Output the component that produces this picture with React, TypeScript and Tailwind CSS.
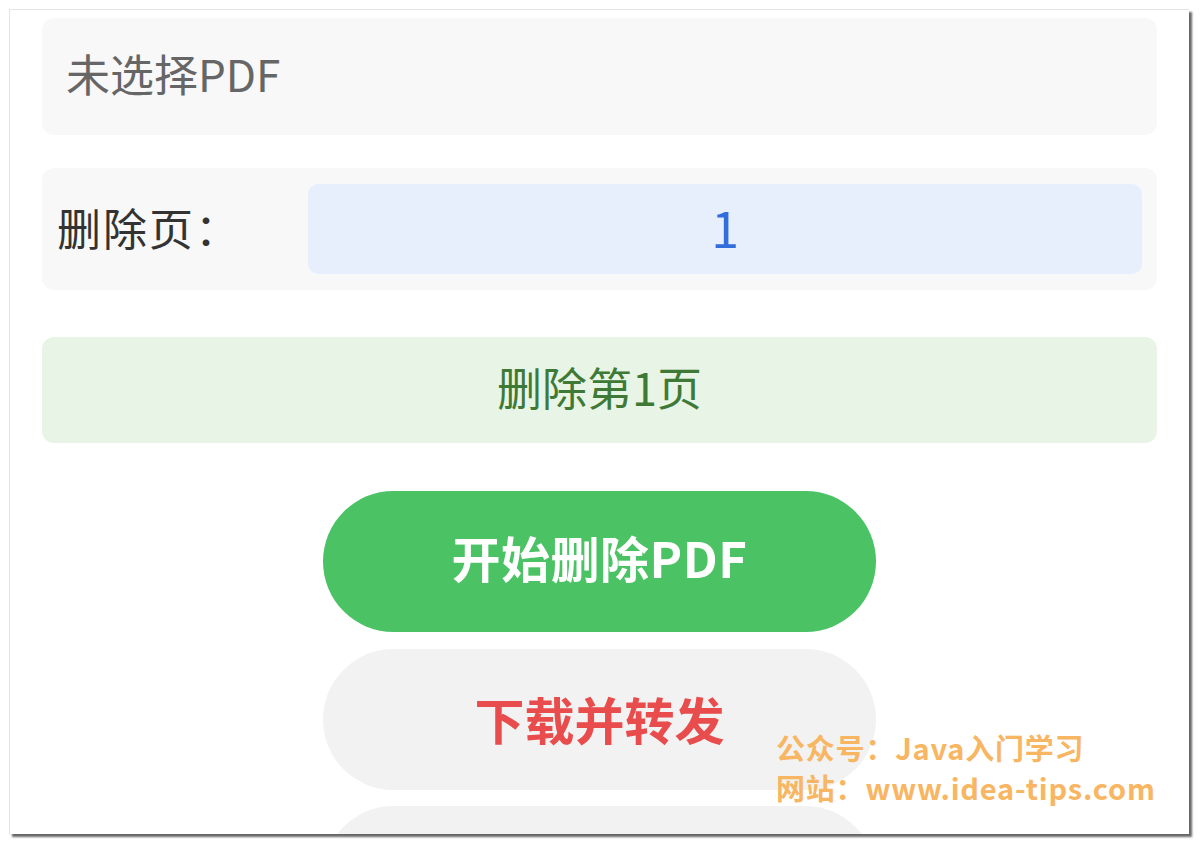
import React from "react";

export default function App() {
  const font = { fontFamily: '"Noto Sans CJK SC", "Noto Sans", sans-serif' };
  return (
    <div className="w-[1200px] h-[846px] bg-white pt-[9px] pl-[9px]" style={font}>
      <div className="relative w-[1180px] h-[825px] bg-white overflow-hidden border-t border-l border-[#e4e4e4] shadow-[3px_3px_2px_rgba(0,0,0,0.6)]">
        <div className="flex flex-col px-[32px] pt-[8px]">
          <div className="h-[117px] rounded-[12px] bg-[#f8f8f8] flex items-center pl-[24px] pb-[8px] text-[44px] text-[#666666]">
            未选择PDF
          </div>
          <div className="mt-[33px] h-[122px] rounded-[12px] bg-[#f8f8f8] flex items-center pl-[15px] pr-[15px]">
            <div className="w-[251px] pb-[4px] text-[44px] tracking-[2px] text-[#333333]">删除页：</div>
            <div className="flex-1 h-[90px] rounded-[10px] bg-[#e8effc] flex items-center justify-center pb-[6px] text-[50px] text-[#326ddb]">
              1
            </div>
          </div>
          <div className="mt-[47px] h-[106px] rounded-[12px] bg-[#e8f4e6] flex items-center justify-center pb-[6px] text-[45px] text-[#3e7a35]">
            删除第1页
          </div>
          <div className="mt-[48px] flex flex-col items-center">
            <div className="w-[553px] h-[141px] rounded-full bg-[#4bc263] flex items-center justify-center pb-[10px] text-[49px] font-bold text-white tracking-[0.5px]">
              开始删除PDF
            </div>
            <div className="mt-[17px] w-[553px] h-[141px] rounded-full bg-[#f2f2f2] flex items-center justify-center pb-[2px] text-[50px] font-bold text-[#e84c4c]">
              下载并转发
            </div>
            <div className="mt-[16px] w-[553px] h-[141px] rounded-full bg-[#f2f2f2]"></div>
          </div>
        </div>
        <div className="absolute left-[766px] top-[717px] flex flex-col text-[29px] font-bold leading-[40px] tracking-[0.8px] text-[#f8b562]">
          <div>公众号：Java入门学习</div>
          <div>网站：www.idea-tips.com</div>
        </div>
      </div>
    </div>
  );
}
